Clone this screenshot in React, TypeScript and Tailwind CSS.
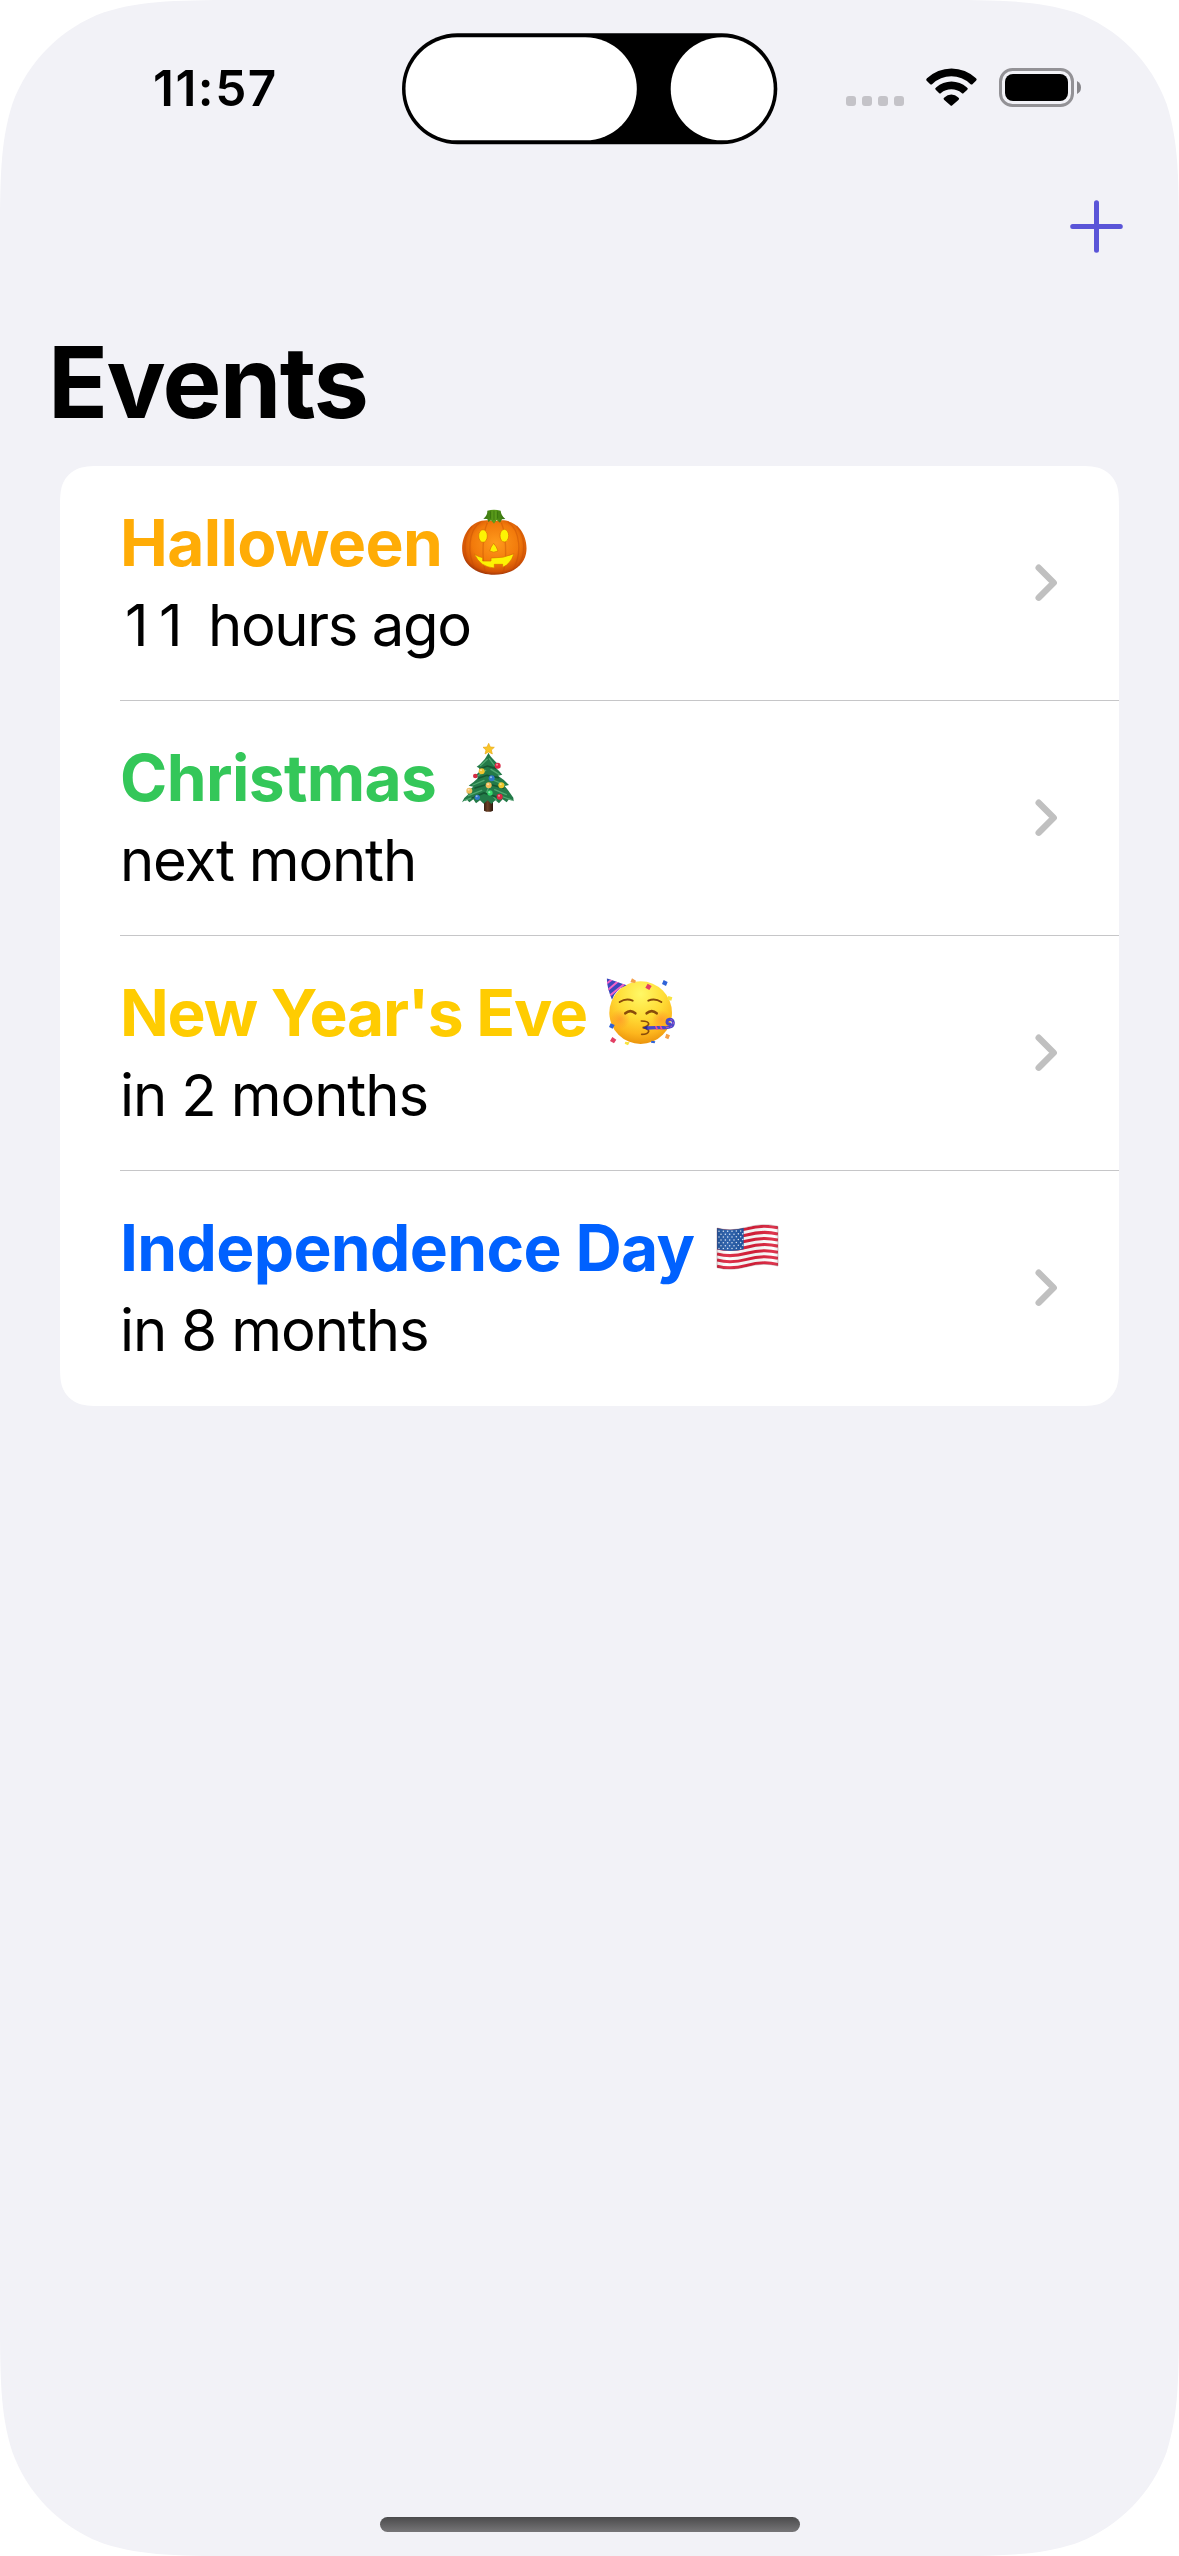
import type { ReactNode } from "react";

type CornerProps = { className: string };

/** Continuous-curvature corner mask, drawn for the top-left and flipped by class. */
function Corner({ className }: CornerProps) {
  return (
    <svg viewBox="0 0 1.528665 1.528665" className={`absolute ${className}`} aria-hidden="true">
      <path
        fill="currentColor"
        d="M0 0H1.528665C1.088493 0 .868407 0 .631494 .074911C.372824 .16906 .16906 .372824 .074911 .631494C0 .868407 0 1.088493 0 1.528665Z"
      />
    </svg>
  );
}

function Pumpkin() {
  return (
    <svg viewBox="54 48 216 216" className="size-[72px]" aria-label="jack-o-lantern">
      <defs>
        <radialGradient id="pk" cx="0.52" cy="0.42" r="0.6">
          <stop offset="0" stopColor="#ff9a1c" />
          <stop offset="0.6" stopColor="#f27a0b" />
          <stop offset="0.88" stopColor="#d25205" />
          <stop offset="1" stopColor="#963008" />
        </radialGradient>
        <linearGradient id="pkStem" x1="0" x2="1">
          <stop offset="0" stopColor="#2f6b0c" />
          <stop offset="0.5" stopColor="#5fa01c" />
          <stop offset="1" stopColor="#2f6b0c" />
        </linearGradient>
      </defs>
      <path fill="url(#pk)" d="M163 94C192 86 222 94 240 117C256 137 263 166 258 191C250 229 212 254 163 254C114 254 76 229 68 191C63 166 70 137 86 117C104 94 134 86 163 94Z" />
      <g fill="none" stroke="#c24c05" strokeWidth="4" opacity="0.4">
        <path d="M122 96C86 120 78 190 108 241" />
        <path d="M204 96C240 120 248 190 218 241" />
        <path d="M142 98C128 130 124 205 137 250" />
        <path d="M184 98C198 130 202 205 189 250" />
        <path d="M96 108C68 140 70 195 90 227" />
        <path d="M230 108C258 140 256 195 236 227" />
      </g>
      <path fill="url(#pkStem)" d="M142 62Q162 56 182 62Q183 76 196 87L186 88L180 98L170 90L162 101L153 91L145 96L142 87L130 86Q143 76 142 62Z" />
      <path stroke="#2c6409" strokeWidth="2" fill="none" d="M151 64V86M162 62V90M173 64V86" />
      <g fill="#fdf303" stroke="#d86a05" strokeWidth="2">
        <ellipse cx="129" cy="138" rx="13" ry="19" />
        <ellipse cx="193" cy="137" rx="13" ry="19" />
        <path d="M161 160Q170 170 174 183Q161 190 149 183Q152 170 161 160Z" />
        <path d="M103 192Q115 201 128 203V213H153V204Q190 206 222 191Q212 222 188 232V223H163V234Q121 232 103 192Z" />
      </g>
    </svg>
  );
}

function ChristmasTree() {
  return (
    <svg viewBox="36 33 216 216" className="size-[72px]" aria-label="christmas tree">
      <defs>
        <linearGradient id="trunk" x1="0" x2="1">
          <stop offset="0" stopColor="#3a2012" />
          <stop offset="0.4" stopColor="#6b4025" />
          <stop offset="1" stopColor="#2c180d" />
        </linearGradient>
      </defs>
      <path fill="url(#trunk)" d="M132 205H159V242Q146 249 132 242Z" />
      <path fill="#237a48" d="M146 68C151 82 164 90 182 112L168 114Q179 124 187 134L174 137Q192 148 207 165L194 168Q206 182 220 203L221 214L208 206L200 217L188 208L177 220L166 211L154 222L143 211L131 221L120 211L108 220L100 208L88 217L80 208L66 217Q73 201 85 193L80 187Q90 177 100 170L86 167Q104 154 115 143L103 139Q115 130 124 118L110 110Q132 96 146 68Z" />
      <g fill="none" stroke="#4fa870" strokeWidth="4" strokeLinecap="round">
        <path d="M142 88L121 107M148 86L163 106M137 121L112 139M153 118L177 133M132 151L99 165M158 150L194 164M125 181L85 197M146 172L139 190M164 179L199 194M103 201L75 211M157 196L170 211M190 201L214 210" />
      </g>
      <g fill="none" stroke="#155632" strokeWidth="5" strokeLinecap="round">
        <path d="M120 116L142 108L167 115M115 145L141 136L175 143M105 174L145 162L190 174M96 204L132 189L174 202" />
      </g>
      <path fill="#f9c528" stroke="#e8a813" strokeWidth="2" d="M146 40L151 51L163 52L154 60L157 72L146 66L135 72L138 60L129 52L141 51Z" />
      <g>
        <circle cx="173" cy="107" r="9" fill="#df2745" />
        <circle cx="106" cy="138" r="7" fill="#d32b43" />
        <circle cx="125" cy="124" r="9" fill="#efc32f" />
        <circle cx="155" cy="145" r="9" fill="#2e78c8" />
        <circle cx="146" cy="166" r="9" fill="#f2bd5a" />
        <circle cx="184" cy="166" r="9" fill="#edc62b" />
        <circle cx="88" cy="182" r="9" fill="#f0bb5b" />
        <circle cx="150" cy="189" r="8" fill="#35d86b" />
        <circle cx="112" cy="202" r="8" fill="#2e78c8" />
        <circle cx="179" cy="200" r="9" fill="#df2745" />
      </g>
      <g fill="#fff" opacity="0.5">
        <circle cx="171" cy="104" r="3" />
        <circle cx="123" cy="121" r="3" />
        <circle cx="153" cy="142" r="3" />
        <circle cx="144" cy="163" r="3" />
        <circle cx="182" cy="163" r="3" />
        <circle cx="86" cy="179" r="3" />
        <circle cx="148" cy="187" r="3" />
        <circle cx="110" cy="199" r="3" />
        <circle cx="177" cy="197" r="3" />
      </g>
    </svg>
  );
}

function PartyFace() {
  return (
    <svg viewBox="45 33 216 216" className="size-[72px]" aria-label="partying face">
      <defs>
        <radialGradient id="face" cx="0.5" cy="0.2" r="0.85">
          <stop offset="0" stopColor="#fff866" />
          <stop offset="0.45" stopColor="#ffdc35" />
          <stop offset="0.75" stopColor="#fdb61d" />
          <stop offset="1" stopColor="#e68a07" />
        </radialGradient>
        <radialGradient id="cheek">
          <stop offset="0" stopColor="#ff8a2a" stopOpacity="0.6" />
          <stop offset="1" stopColor="#ff8a2a" stopOpacity="0" />
        </radialGradient>
        <clipPath id="hat">
          <path d="M50 40L110 61Q78 72 66 104Q52 74 50 40Z" />
        </clipPath>
      </defs>
      <circle cx="152" cy="143" r="94" fill="url(#face)" />
      <circle cx="90" cy="163" r="30" fill="url(#cheek)" />
      <circle cx="214" cy="163" r="28" fill="url(#cheek)" />
      <g clipPath="url(#hat)">
        <path fill="#3c47bd" d="M40 30H120V110H40Z" />
        <path stroke="#f463c6" strokeWidth="6" fill="none" d="M48 57L68 42M50 78L88 46M54 96L104 56" />
      </g>
      <g fill="none" stroke="#8a4c0a" strokeLinecap="round">
        <path strokeWidth="6" d="M89 111Q108 99 128 107M175 107Q195 99 214 111" />
        <path strokeWidth="8" d="M106 145Q121 132 136 145M170 145Q185 132 200 145" />
        <path strokeWidth="5" d="M154 168Q176 168 176 177Q174 184 158 188Q176 190 176 199Q174 208 155 208" />
      </g>
      <path fill="#2b2b91" d="M158 188L174 182V196Z" />
      <path d="M172 189L196 188L224 188" stroke="#4a48c8" strokeWidth="10" fill="none" />
      <path d="M197 183L202 194M211 183L216 194" stroke="#ee4c98" strokeWidth="5" />
      <path d="M222 188Q250 190 250 173Q249 163 239 163Q231 164 231 172Q232 179 240 177" stroke="#4a48c8" strokeWidth="9" fill="none" strokeLinecap="round" />
      <path d="M229 188Q250 187 250 173Q249 163 239 163" stroke="#ce59cf" strokeWidth="3" strokeDasharray="6 6" fill="none" />
      <path fill="#e23f64" d="M173 56L185 63L178 75L166 68ZM67 216L79 224L72 235L60 228Z" />
      <path fill="#2f63d8" d="M221 45L233 51L228 63L216 57ZM62 175L74 180L68 191L57 186ZM184 227L196 229L194 235L183 233Z" />
      <path fill="#f5a04a" d="M126 40L138 47L135 54L121 52ZM229 206L240 211L235 223L225 218Z" />
      <path fill="#f8e441" d="M235 93L247 97L244 107L232 104ZM106 230L119 232L114 241L104 236Z" />
    </svg>
  );
}

const redStripes = [0, 2, 4, 6, 8, 10, 12];
const starRows = [0, 1, 2, 3, 4, 5, 6];
const starCols = [0, 1, 2, 3, 4, 5];

function Flag() {
  const h = 119 / 13;
  return (
    <svg viewBox="36 33 216 216" className="size-[72px]" aria-label="flag of the United States">
      <defs>
        <clipPath id="flagShape">
          <path d="M51 84Q92 95 140 82Q190 68 234 79V198Q190 187 142 200Q92 214 51 203Z" />
        </clipPath>
        <linearGradient id="flagShade" x1="0" x2="1">
          <stop offset="0" stopColor="#000" stopOpacity="0.15" />
          <stop offset="0.2" stopColor="#fff" stopOpacity="0.1" />
          <stop offset="0.55" stopColor="#000" stopOpacity="0.06" />
          <stop offset="0.85" stopColor="#fff" stopOpacity="0.1" />
          <stop offset="1" stopColor="#000" stopOpacity="0.2" />
        </linearGradient>
      </defs>
      <g clipPath="url(#flagShape)">
        <path fill="#fff" d="M40 60H250V220H40Z" />
        {redStripes.map((i) => (
          <path
            key={i}
            transform={`translate(0 ${i * h + h / 2})`}
            d="M51 84Q92 95 140 82Q190 68 234 79"
            fill="none"
            stroke="#dc1f3a"
            strokeWidth={h}
          />
        ))}
        <path fill="#1c54a3" d="M51 80V148Q92 158 131 148V80Z" />
        {starRows.map((r) =>
          starCols.map((c) => (
            <circle
              key={`${r}-${c}`}
              cx={57 + c * 13 + (r % 2) * 6}
              cy={94 + r * 8.6 - (c > 3 ? 1 : 0)}
              r="2.3"
              fill="#d9e6f7"
            />
          )),
        )}
        <path fill="url(#flagShade)" d="M40 60H250V220H40Z" />
      </g>
      <path fill="none" stroke="#7b3a48" strokeOpacity="0.45" strokeWidth="2" d="M51 84Q92 95 140 82Q190 68 234 79V198Q190 187 142 200Q92 214 51 203Z" />
    </svg>
  );
}

type EventItem = {
  title: string;
  detail: ReactNode;
  titleClass: string;
  detailClass: string;
  emoji: ReactNode;
};

const events: EventItem[] = [
  {
    title: "Halloween",
    detail: (
      <>
        <span className="tracking-[10.5px]">11</span> hours ago
      </>
    ),
    titleClass: "w-[338px] tracking-[-0.6px] text-[#ffac06]",
    detailClass: "pl-[5px] tracking-[-1.4px]",
    emoji: <Pumpkin />,
  },
  {
    title: "Christmas",
    detail: "next month",
    titleClass: "w-[332px] tracking-[-0.6px] text-[#34c759]",
    detailClass: "tracking-[-1.2px]",
    emoji: <ChristmasTree />,
  },
  {
    title: "New Year's Eve",
    detail: "in 2 months",
    titleClass: "w-[485px] tracking-[-1.2px] text-[#ffcc01]",
    detailClass: "tracking-[-1.1px]",
    emoji: <PartyFace />,
  },
  {
    title: "Independence Day",
    detail: "in 8 months",
    titleClass: "w-[592px] tracking-[-0.65px] text-[#0061ff]",
    detailClass: "tracking-[-1.1px]",
    emoji: <Flag />,
  },
];

function EventRow({ item, last }: { item: EventItem; last: boolean }) {
  return (
    <li className="flex h-[235px] pl-[60px]">
      <div className={`flex flex-1 justify-between pr-[58px] ${last ? "" : "border-b border-[#c6c6c8]"}`}>
        <div className="pt-[34px]">
          <div className="flex h-[86px] items-center">
            <span className={`text-[64px] leading-[86px] font-bold whitespace-nowrap ${item.titleClass}`}>
              {item.title}
            </span>
            <span className="-mt-0.5">{item.emoji}</span>
          </div>
          <div className={`text-[58px] leading-[78px] whitespace-nowrap ${item.detailClass}`}>{item.detail}</div>
        </div>
        <svg
          viewBox="0 0 30 44"
          className="mt-[95px] h-[44px] w-[30px]"
          fill="none"
          stroke="#c0c0c0"
          strokeWidth="6.4"
          strokeLinecap="round"
          strokeLinejoin="round"
        >
          <path d="M7.7 6.7L22.7 21.7L7.7 36.7" />
        </svg>
      </div>
    </li>
  );
}

function StatusBar() {
  return (
    <header className="flex h-[177px] items-start">
      <div className="w-[401px] pt-[58px] pl-[153px] text-[49.5px] leading-[60px] font-semibold tracking-[1.5px]">
        11:57
      </div>
      <svg viewBox="0 0 377 113" className="mt-[32px] h-[113px] w-[377px]">
        <rect x="1" y="1.3" width="375.3" height="111" rx="55.5" fill="#000" />
        <rect x="4.5" y="5.3" width="231.3" height="103" rx="51.5" fill="#fff" />
        <circle cx="321.2" cy="56.8" r="51.5" fill="#fff" />
      </svg>
      <div className="flex pt-[66px] pl-[68px]">
        <div className="flex gap-[6px] pt-[30px]">
          <i className="size-[10px] rounded-[3px] bg-[#c4c3c8]" />
          <i className="size-[10px] rounded-[3px] bg-[#c4c3c8]" />
          <i className="size-[10px] rounded-[3px] bg-[#c4c3c8]" />
          <i className="size-[10px] rounded-[3px] bg-[#c4c3c8]" />
        </div>
        <svg viewBox="0 0 162 132" className="ml-[20px] h-[44px] w-[54px]">
          <path d="M9 37A106 106 0 0 1 156 37Q160 41 156 44L146 54Q143 57 139 54A82 82 0 0 0 25 54Q21 57 18 54L8 44Q5 41 9 37Z" />
          <path d="M37 64A68 68 0 0 1 128 64Q134 68 130 71L119 81Q116 84 113 81A49 49 0 0 0 51 81Q48 84 45 81L35 71Q31 68 37 64Z" />
          <path d="M62 94A27 27 0 0 1 102 94Q108 98 104 101L85 118Q82 121 79 118L60 101Q56 98 62 94Z" />
        </svg>
        <svg viewBox="0 0 84 42" className="ml-[21px] h-[42px] w-[84px]">
          <rect x="1.5" y="3.5" width="72" height="36" rx="12" fill="none" stroke="#939296" strokeWidth="3" />
          <rect x="6" y="8" width="63" height="27" rx="8" />
          <path d="M78 15Q82 17 82 21.5Q82 26 78 28Z" fill="#87868a" />
        </svg>
      </div>
    </header>
  );
}

export default function App() {
  return (
    <div className="relative flex h-[2556px] w-[1179px] flex-col overflow-hidden bg-[#f2f2f7] font-['Inter',sans-serif] text-black">
      <StatusBar />
      <nav className="flex h-[99px] items-center justify-end pr-[55px]">
        <svg viewBox="0 0 55 55" className="size-[55px]" fill="none" stroke="#5a55d8" strokeWidth="5" strokeLinecap="round">
          <path d="M3.7 27.5H51.3M27.5 3.7V51.3" />
        </svg>
      </nav>
      <h1 className="mt-[46px] pl-[48px] text-[99px] leading-[120px] font-bold tracking-[-1.65px]">Events</h1>
      <ul className="relative mx-[60px] mt-[24px] bg-white">
        {events.map((item, i) => (
          <EventRow key={item.title} item={item} last={i === events.length - 1} />
        ))}
        <Corner className="top-0 left-0 size-[46px] text-[#f2f2f7]" />
        <Corner className="top-0 right-0 size-[46px] -scale-x-100 text-[#f2f2f7]" />
        <Corner className="bottom-0 left-0 size-[46px] -scale-y-100 text-[#f2f2f7]" />
        <Corner className="right-0 bottom-0 size-[46px] rotate-180 text-[#f2f2f7]" />
      </ul>
      <div className="mt-auto mb-[24px] h-[15px] w-[420px] self-center rounded-full bg-linear-to-b from-[#4b4b4c] to-[#777678]" />
      <Corner className="top-0 left-0 size-[252px] text-white" />
      <Corner className="top-0 right-0 size-[252px] -scale-x-100 text-white" />
      <Corner className="bottom-0 left-0 size-[252px] -scale-y-100 text-white" />
      <Corner className="right-0 bottom-0 size-[252px] rotate-180 text-white" />
    </div>
  );
}
